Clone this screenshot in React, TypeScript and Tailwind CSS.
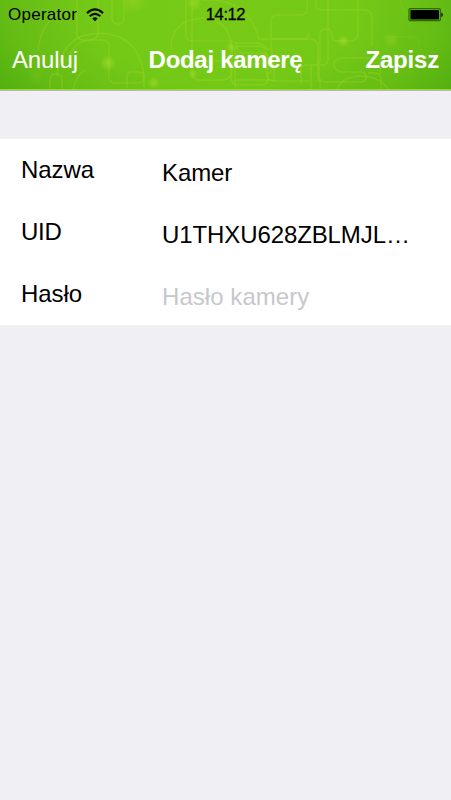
import React from 'react'

const fields = [
    { label: 'Nazwa', value: 'Kamer', labelStyle: 'tracking-[-0.05px]', valueStyle: 'text-black tracking-[-0.1px]' },
    { label: 'UID', value: 'U1THXU628ZBLMJL…', labelStyle: 'tracking-[-0.3px]', valueStyle: 'text-black tracking-[-0.1px]' },
    { label: 'Hasło', value: 'Hasło kamery', labelStyle: 'tracking-[-0.05px]', valueStyle: 'text-[#c7c7cd] tracking-[0.05px]' },
]

const Circuit = () => {
    return (
        <svg className='absolute inset-0' width='451' height='89' viewBox='0 0 451 89' fill='none'>
            <defs>
                <radialGradient id='dot'>
                    <stop offset='0' stopColor='#b0e030' stopOpacity='0.55' />
                    <stop offset='0.5' stopColor='#a8dc2c' stopOpacity='0.35' />
                    <stop offset='1' stopColor='#a8dc2c' stopOpacity='0' />
                </radialGradient>
            </defs>
            <g stroke='#b0dc30' strokeOpacity='0.28' strokeWidth='1.4'>
                <path d='M57 76Q60 45 82 36q19-6 37 1q21 9 25 38v14' />
                <path d='M50 89V80q0-6 6-6t6 6v9M73 89q3-14 12-19' />
                <path d='M77 0v34q0 6 6 6h20q6 0 6 6v31q0 6 6 6h22q7 0 7-7q0-4-6-4h-7q-4 0-4 5v11' />
                <path d='M98 0v32q0 8-8 8q-18 1-22 22' />
                <path d='M112 0v18q0 6 6 6t6-6V0M38 50q3-25 20-37' />
                <path d='M171 50q0-31 32-32q27 2 29 30v22q0 10-10 10h-22q-8 0-8-7V0' />
                <path d='M186 0v35q0 6 6 6h39q6 0 6 6t7 6h17q7 0 7 6v20q0 6-7 6h-22q-8 0-8-8v-9q0-7-7-7h-47' />
                <path d='M202 0q46-3 57 39h45q5 0 5-6M271 50V21q0-6 6-6h24q6 0 6-6V0' />
                <path d='M235 43h22q5 0 8 4q3 3 7 3v18q0 6-6 6M235 89V50q0-4 5-4h18q8 0 8 8v18q0 9 9 9h35' />
                <path d='M272 39h38q8 0 8 8v34M252 64h22v16h-38' />
                <path d='M316 0v5q0 5 6 5h42q8 0 8 8v28M358 0v33q0 8-8 8h-13q-5 0-5-6q0-6-6-6t-6 6v24q0 6-6 6h-8q-5 0-5 5v13' />
                <path d='M328 0v59q0 6-6 6h-3v11q0 6 6 6h36q5 0 5-5q0-5-5-5h-18q-8 0-9-7q0-7 9-7h36' />
                <path d='M311 89V65M320 89V79M337 89q5-12 22-13q20 0 29 13M368 73h7q6 0 6 7v9M380 58v16' />
                <path d='M400 0q4 14 14 26' strokeOpacity='0.12' />
                <path d='M382 37h30q7 0 7 7' strokeOpacity='0.12' />
            </g>
            <g fill='url(#dot)'>
                <circle cx='108' cy='63' r='8' />
                <circle cx='133' cy='0' r='14' fillOpacity='0.6' />
                <circle cx='194' cy='3' r='8' fillOpacity='0.8' />
                <circle cx='193' cy='74' r='5' fillOpacity='0.8' />
                <circle cx='231' cy='47' r='5' />
                <circle cx='154' cy='83' r='6' />
                <circle cx='343' cy='41' r='6' />
                <circle cx='391' cy='40' r='8' fillOpacity='0.45' />
                <circle cx='36' cy='76' r='9' fillOpacity='0.2' />
            </g>
        </svg>
    )
}

const Wifi = () => {
    return (
        <svg width='18' height='14' viewBox='0 0 18 14' fill='none' stroke='#050f00' strokeWidth='2.1'>
            <path d='M1 5.1Q9-2.2 17 5.1' />
            <path d='M3.7 8.3Q9 3.3 14.3 8.3' />
            <path d='M6.2 10.6Q9 7.9 11.8 10.6L9 13.2Z' fill='#050f00' stroke='none' />
        </svg>
    )
}

const Battery = () => {
    return (
        <svg width='35' height='14' viewBox='0 0 35 14'>
            <rect x='1' y='0.7' width='31.4' height='12' rx='1.3' fill='none' stroke='#2c6a02' strokeWidth='1.2' />
            <rect x='2.4' y='2' width='28.6' height='9.6' rx='0.4' fill='black' />
            <path d='M33.2 4.4q1.8 .6 1.8 2.3t-1.8 2.3z' fill='#102b00' />
        </svg>
    )
}

const Header = () => {
    return (
        <header className='h-[91px] border-b border-[#b8b8bc] bg-[#eeeef3]'>
            <div className='relative h-[90px] overflow-hidden border-b border-[#98dc20] bg-[radial-gradient(ellipse_270px_150px_at_50%_10%,#77cb17_0%,#74c917_50%,#65bc14_80%,#50af10_100%)]'>
                <Circuit />
                <div className='relative flex h-[30px] items-center justify-between px-[8px] text-black'>
                    <div className='flex w-[190px] items-center gap-[9px]'>
                        <span className='text-[17px] tracking-[0.25px]'>Operator</span>
                        <Wifi />
                    </div>
                    <div className='pb-[2px] text-[16.5px] tracking-[-0.4px] [-webkit-text-stroke:0.3px_black]'>14:12</div>
                    <div className='flex w-[190px] justify-end'>
                        <Battery />
                    </div>
                </div>
                <div className='relative flex h-[60px] items-center justify-between px-3 text-[24px] text-white'>
                    <div className='w-[90px] tracking-[-0.15px]'>Anuluj</div>
                    <div className='font-bold tracking-[-0.3px]'>Dodaj kamerę</div>
                    <div className='w-[90px] text-right font-bold tracking-[-0.2px]'>Zapisz</div>
                </div>
            </div>
        </header>
    )
}

const App = () => {
    return (
        <div className="flex h-[800px] w-[451px] flex-col overflow-hidden bg-[#efeff4] font-['Liberation_Sans',Arial,sans-serif]">
            <Header />
            <main className='mt-12 bg-white text-[24px] text-black'>
                {fields.map((field) => (
                    <div key={field.label} className='flex h-[62px] items-center pl-[21px]'>
                        <div className={`w-[141px] ${field.labelStyle}`}>{field.label}</div>
                        <div className={`pt-[6px] whitespace-nowrap ${field.valueStyle}`}>{field.value}</div>
                    </div>
                ))}
            </main>
        </div>
    )
}

export default App
